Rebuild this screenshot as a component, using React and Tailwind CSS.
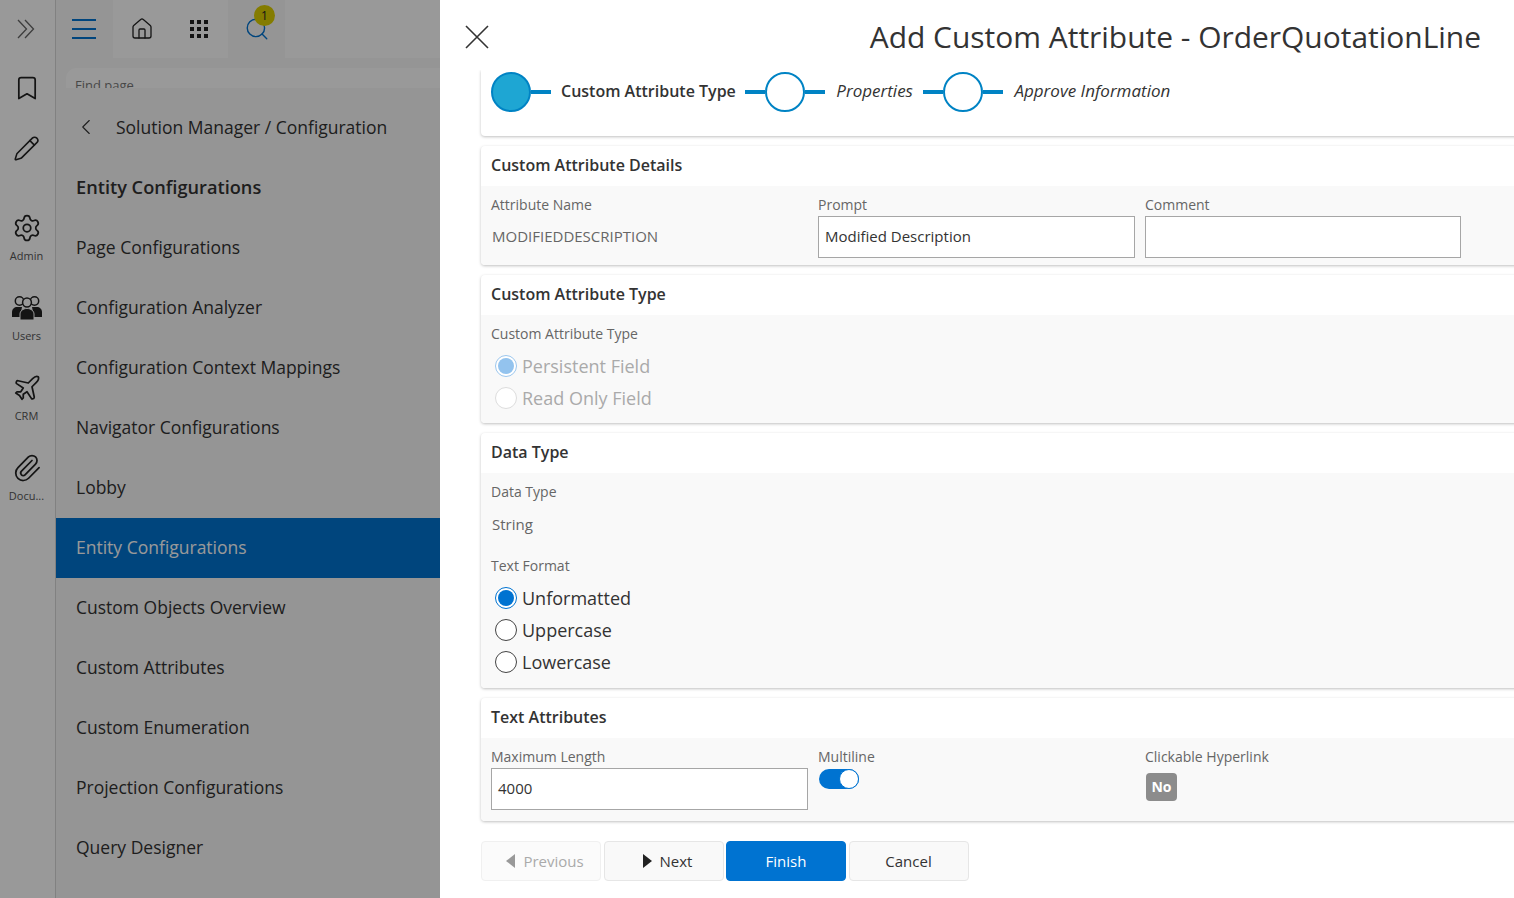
import React from "react";
import { Bookmark, Pencil, Settings, Plane, Paperclip, House, Search, ChevronLeft } from "lucide-react";

const RailItem = ({ icon, label }) => (
  <div className="h-[80px] flex flex-col items-center pt-[12px] text-[#333]">
    <div className="h-[32px] flex items-center justify-center">{icon}</div>
    <div className="text-[11px] leading-[16px] mt-[4px] text-[#555]">{label}</div>
  </div>
);

const Chevrons = () => (
  <svg width="20" height="20" viewBox="0 0 20 20" fill="none" stroke="#666" strokeWidth="1.3" className="mr-[2px]">
    <path d="M2 1l8.5 9L2 19" />
    <path d="M9 1l8.5 9L9 19" />
  </svg>
);

const UsersIcon = () => (
  <svg width="32" height="26" viewBox="0 0 32 26" fill="none" stroke="#222" strokeWidth="1.5">
    <circle cx="8.5" cy="6" r="4.2" />
    <circle cx="23.5" cy="6" r="4.2" />
    <circle cx="16" cy="7.5" r="4.4" fill="#fff" />
    <path d="M1 22v-5c0-3 2.5-5 5-5h5l-2 10z" fill="#222" stroke="none" />
    <path d="M31 22v-5c0-3-2.5-5-5-5h-5l2 10z" fill="#222" stroke="none" />
    <path d="M9 25v-6c0-3 3-5.500 7-5.500s7 2.500 7 5.500v6z" fill="#222" stroke="#fff" strokeWidth="1" />
  </svg>
);

const GridIcon = () => (
  <svg width="20" height="20" viewBox="0 0 20 20" fill="#222">
    {[1, 8, 15].map((y) =>
      [1, 8, 15].map((x) => <rect key={x + "-" + y} x={x} y={y} width="4" height="4" />)
    )}
  </svg>
);

const CloseIcon = () => (
  <svg width="24" height="24" viewBox="0 0 24 24" fill="none" stroke="#333" strokeWidth="1.6" className="mt-[3px]">
    <path d="M1 1l22 22M23 1L1 23" />
  </svg>
);

const navItems = [
  "Page Configurations",
  "Configuration Analyzer",
  "Configuration Context Mappings",
  "Navigator Configurations",
  "Lobby",
  "Entity Configurations",
  "Custom Objects Overview",
  "Custom Attributes",
  "Custom Enumeration",
  "Projection Configurations",
  "Query Designer",
];

const Card = ({ title, children, className }) => (
  <section className="w-[1060px] rounded-[4px] bg-white shadow-[0_1px_3px_rgba(0,0,0,0.25)]">
    <h2 className="h-[40px] pl-[10px] pb-[2px] flex items-center text-[16px] font-semibold text-[#333]">{title}</h2>
    <div className={"bg-[#f9f9f9] rounded-b-[4px] pl-[10px] " + className}>{children}</div>
  </section>
);

const Label = ({ children }) => (
  <div className="text-[14px] leading-[20px] text-[#666]">{children}</div>
);

const Radio = ({ label, state }) => {
  const off = state === "disabled" || state === "disabledOn";
  return (
    <div className="flex items-center h-[32px] pl-[4px]">
      <span
        className={
          "w-[22px] h-[22px] rounded-full flex items-center justify-center bg-white border " +
          (state === "on"
            ? "border-[#0073d1]"
            : state === "disabledOn"
            ? "border-[#9cc7ee]"
            : state === "disabled"
            ? "border-[#dddddd]"
            : "border-[#444]")
        }
      >
        {state === "on" && <span className="w-[16px] h-[16px] rounded-full bg-[#0073d1]" />}
        {state === "disabledOn" && <span className="w-[16px] h-[16px] rounded-full bg-[#93c3ee]" />}
      </span>
      <span className={"ml-[5px] text-[18px] " + (off ? "text-[#aaaaaa]" : "text-[#333]")}>{label}</span>
    </div>
  );
};

const Step = ({ label, active }) => (
  <div className="flex items-center">
    {!active && <span className="w-[20px] h-[4px] bg-[#0083c4]" />}
    <span
      className={
        "w-[40px] h-[40px] rounded-full border-2 border-[#0083c4] " + (active ? "bg-[#1ea6d3]" : "bg-white")
      }
    />
    <span className="w-[20px] h-[4px] bg-[#0083c4]" />
    <span
      className={
        "pb-[2px] " +
        (active
          ? "ml-[10px] mr-[9px] text-[16px] font-semibold text-[#333]"
          : "ml-[11.500px] mr-[10px] text-[17px] italic text-[#333]")
      }
    >
      {label}
    </span>
  </div>
);

const Btn = ({ children, cls }) => (
  <button className={"w-[120px] h-[40px] rounded-[4px] border flex items-center justify-center text-[15px] " + cls}>
    {children}
  </button>
);

const Tri = ({ left, color }) => (
  <svg width="9" height="14" viewBox="0 0 9 14" fill={color} className="mr-[8px]">
    <path d={left ? "M9 0v14L0 7z" : "M0 0v14l9-7z"} />
  </svg>
);

const Field = ({ value, w = "w-[317px]" }) => (
  <div className={w + " h-[42px] mt-[1px] pb-[2px] border border-[#a6a6a6] bg-white flex items-center px-[6px] text-[15px] text-[#333]"}>
    {value}
  </div>
);

export default function App() {
  return (
    <div className="flex w-full h-screen overflow-hidden bg-white font-['Open_Sans',sans-serif]">
      <aside className="relative w-[440px] shrink-0 flex overflow-hidden bg-white">
        <div className="w-[56px] shrink-0 border-r border-[#d8d8d8] pr-[2px] flex flex-col items-center">
          <div className="h-[58px] flex items-center">
            <Chevrons />
          </div>
          <div className="h-[60px] flex items-center">
            <Bookmark size={28} strokeWidth={1.5} color="#222" />
          </div>
          <div className="h-[60px] flex items-center">
            <Pencil size={27} strokeWidth={1.4} color="#222" />
          </div>
          <div className="h-[22px]" />
          <div className="w-full">
            <RailItem icon={<Settings size={30} strokeWidth={1.4} color="#222" />} label="Admin" />
            <RailItem icon={<UsersIcon />} label="Users" />
            <RailItem icon={<Plane size={30} strokeWidth={1.4} color="#222" />} label="CRM" />
            <RailItem icon={<Paperclip size={30} strokeWidth={1.4} color="#222" />} label="Docu..." />
          </div>
        </div>
        <div className="flex-1 min-w-0 bg-[#f9f9f9] flex flex-col">
          <div className="h-[58px] flex shrink-0">
            <div className="w-[57px] pr-[2px] flex flex-col gap-[7px] items-center justify-center">
              <span className="w-[24px] h-[2px] bg-[#0073d1]" />
              <span className="w-[24px] h-[2px] bg-[#0073d1]" />
              <span className="w-[24px] h-[2px] bg-[#0073d1]" />
            </div>
            <div className="w-[58px] bg-white flex items-center justify-center">
              <House size={24} strokeWidth={1.3} color="#222" />
            </div>
            <div className="w-[57px] pr-[2px] bg-white flex items-center justify-center">
              <GridIcon />
            </div>
            <div className="relative w-[57px] flex items-center justify-center">
              <Search size={26} strokeWidth={1.3} color="#0073d1" />
              <span className="absolute left-[26px] top-[5px] w-[21px] h-[21px] rounded-full bg-[#dccf00] flex items-center justify-center text-[12px] text-[#222]">
                1
              </span>
            </div>
            <div className="flex-1 bg-white" />
          </div>
          <div className="h-[30px] shrink-0 pt-[10px] pl-[10px] overflow-hidden">
            <div className="h-[30px] rounded-l-[10px] bg-white pl-[9px] pt-[8px] text-[13px] leading-[18px] text-[#777]">
              Find page
            </div>
          </div>
          <div className="h-[60px] mt-[9px] shrink-0 flex items-center pl-[17px] text-[17.500px] text-[#333]">
            <ChevronLeft size={26} strokeWidth={1} color="#333" />
            <span className="ml-[17px]">Solution Manager / Configuration</span>
          </div>
          <div className="h-[61px] pt-[1px] shrink-0 flex items-center pl-[20px] text-[18.200px] font-semibold text-[#333]">
            Entity Configurations
          </div>
          {navItems.map((t, i) => (
            <div
              key={t}
              className={
                "h-[60px] pb-[2px] shrink-0 flex items-center pl-[20px] text-[17.500px] " +
                (i === 5 ? "bg-[#0073d1] text-white" : "text-[#333]")
              }
            >
              {t}
            </div>
          ))}
        </div>
        <div className="absolute inset-0 bg-black/40" />
      </aside>

      <main className="flex-1 min-w-0 flex flex-col">
        <header className="h-[70px] shrink-0 flex items-center justify-between pl-[25px] pr-[33px]">
          <CloseIcon />
          <h1 className="text-[29.950px] font-normal text-[#333] mt-[4px]">Add Custom Attribute - OrderQuotationLine</h1>
        </header>
        <div className="flex-1 overflow-hidden pl-[41px] flex flex-col gap-[10px]">
          <section className="w-[1060px] h-[66px] shrink-0 rounded-b-[4px] bg-white shadow-[0_1px_3px_rgba(0,0,0,0.25)] pl-[10px] pt-[2px] flex items-start">
            <Step label="Custom Attribute Type" active />
            <Step label="Properties" />
            <Step label="Approve Information" />
          </section>

          <Card title="Custom Attribute Details" className="h-[79px] pt-[9px]">
            <div className="grid grid-cols-[327px_327px_327px]">
              <div>
                <Label>Attribute Name</Label>
                <div className="h-[42px] flex items-center pl-[1px] text-[15px] text-[#666]">MODIFIEDDESCRIPTION</div>
              </div>
              <div>
                <Label>Prompt</Label>
                <Field value="Modified Description" />
              </div>
              <div>
                <Label>Comment</Label>
                <Field value="" w="w-[316px]" />
              </div>
            </div>
          </Card>

          <Card title="Custom Attribute Type" className="h-[108px] pt-[9px]">
            <Label>Custom Attribute Type</Label>
            <div className="mt-[6px]">
              <Radio label="Persistent Field" state="disabledOn" />
              <Radio label="Read Only Field" state="disabled" />
            </div>
          </Card>

          <Card title="Data Type" className="h-[215px] pt-[9px]">
            <Label>Data Type</Label>
            <div className="h-[54px] pb-[10px] flex items-center pl-[1px] text-[15px] text-[#666]">String</div>
            <Label>Text Format</Label>
            <div className="mt-[6px]">
              <Radio label="Unformatted" state="on" />
              <Radio label="Uppercase" state="off" />
              <Radio label="Lowercase" state="off" />
            </div>
          </Card>

          <Card title="Text Attributes" className="h-[83px] pt-[9px]">
            <div className="grid grid-cols-[327px_327px_327px]">
              <div>
                <Label>Maximum Length</Label>
                <Field value="4000" />
              </div>
              <div>
                <Label>Multiline</Label>
                <div className="relative w-[40px] h-[20px] ml-[1px] mt-[2px] rounded-full bg-[#0073d1]">
                  <span className="absolute right-0 top-0 w-[20px] h-[20px] rounded-full bg-white border border-[#0073d1]" />
                </div>
              </div>
              <div>
                <Label>Clickable Hyperlink</Label>
                <div className="ml-[1px] mt-[6px] pb-[2px] w-[31px] h-[28px] rounded-[4px] bg-[#8c8c8c] flex items-center justify-center text-[14px] font-bold text-white">
                  No
                </div>
              </div>
            </div>
          </Card>

          <div className="flex mt-[10px] shrink-0">
            <Btn cls="pl-[8px] bg-[#fbfbfb] border-[#f0f0f0] text-[#aaaaaa]">
              <Tri left color="#999" />
              Previous
            </Btn>
            <Btn cls="ml-[3px] pl-[7px] bg-[#f9f9f9] border-[#e6e6e6] text-[#333]">
              <Tri color="#222" />
              Next
            </Btn>
            <Btn cls="ml-[2px] bg-[#0073d1] border-[#0073d1] text-white">Finish</Btn>
            <Btn cls="ml-[3px] pr-[1px] bg-[#f9f9f9] border-[#e6e6e6] text-[#333]">Cancel</Btn>
          </div>
        </div>
      </main>
    </div>
  );
}
